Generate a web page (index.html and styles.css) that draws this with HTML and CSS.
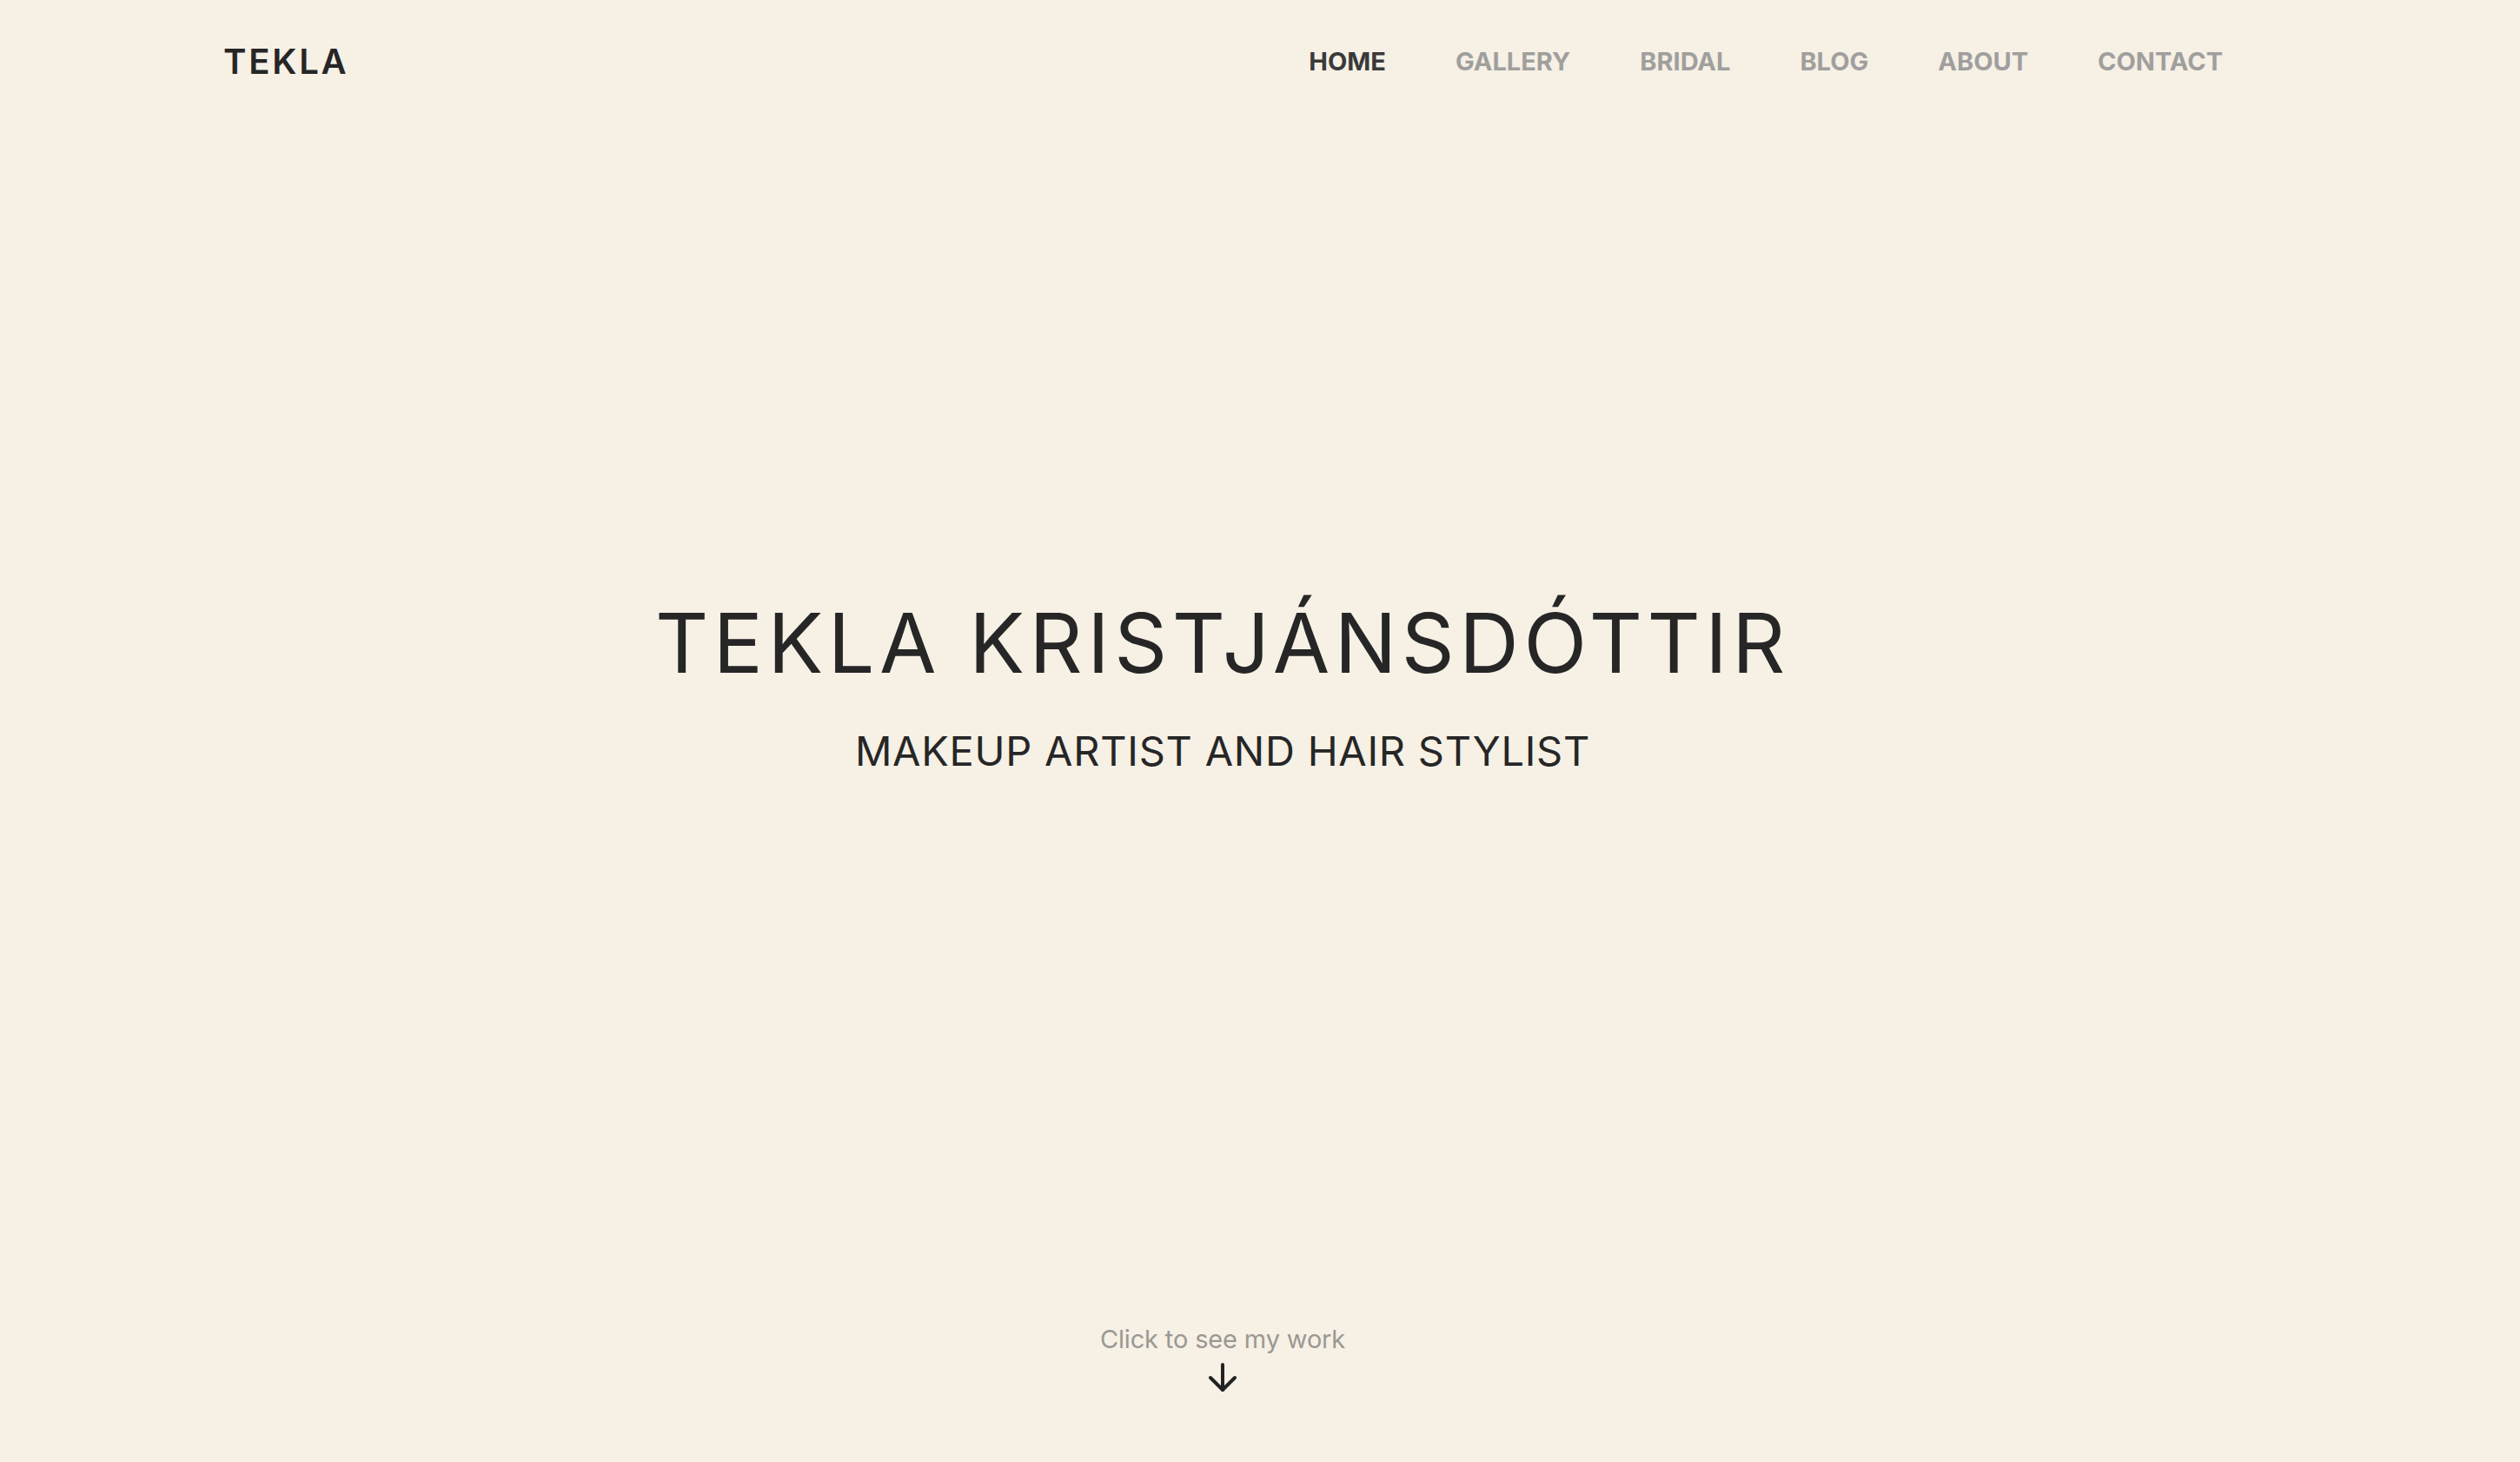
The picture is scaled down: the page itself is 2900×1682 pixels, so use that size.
FILE: index.html
```html
<!DOCTYPE html>
<html lang="en">
<head>
<meta charset="utf-8">
<title>Tekla Kristjánsdóttir</title>
<link rel="stylesheet" href="styles.css">
</head>
<body>
<div class="page">
  <header class="header">
    <a class="logo" href="#">TEKLA</a>
    <nav class="nav">
      <a class="nav-link active" href="#">HOME</a>
      <a class="nav-link" href="#">GALLERY</a>
      <a class="nav-link" href="#">BRIDAL</a>
      <a class="nav-link" href="#">BLOG</a>
      <a class="nav-link" href="#">ABOUT</a>
      <a class="nav-link" href="#">CONTACT</a>
    </nav>
  </header>
  <main class="hero">
    <h1 class="title">TEKLA KRISTJÁNSDÓTTIR</h1>
    <p class="subtitle">MAKEUP ARTIST AND HAIR STYLIST</p>
  </main>
  <a class="more" href="#">
    <span class="more-text">Click to see my work</span>
    <svg class="arrow" width="32" height="34" viewBox="0 0 32 34" fill="none" stroke="#222" stroke-width="4" stroke-linecap="round" stroke-linejoin="round">
      <path d="M16 2 V31"/>
      <path d="M2 17 L16 31 L30 17"/>
    </svg>
  </a>
</div>
</body>
</html>
```

FILE: styles.css
```css
html, body {
  margin: 0;
  padding: 0;
  background: #f6f0e5;
}
body {
  font-family: Inter, "Helvetica Neue", "Liberation Sans", sans-serif;
  color: #262626;
}
a { text-decoration: none; color: inherit; }

.page {
  width: 2814px;
  height: 1682px;
  display: flex;
  flex-direction: column;
  overflow: hidden;
}

.header {
  height: 141px;
  padding: 0 256px 0 257px;
  display: flex;
  align-items: center;
  justify-content: space-between;
}
.logo {
  font-size: 40px;
  font-weight: 600;
  letter-spacing: 2.8px;
  color: #262626;
  line-height: 1;
}
.nav {
  display: flex;
  gap: 80px;
}
.nav-link {
  font-size: 29px;
  font-weight: 700;
  color: #a09f9d;
  line-height: 1;
}
.nav-link.active { color: #3a3a3a; }

.hero {
  padding-top: 551px;
  display: flex;
  flex-direction: column;
  align-items: center;
}
.title {
  margin: 0;
  font-size: 95px;
  font-weight: 400;
  letter-spacing: 5.5px;
  line-height: 1;
  color: #262626;
}
.subtitle {
  margin: 53px 0 0;
  font-size: 47px;
  font-weight: 400;
  letter-spacing: 0.75px;
  line-height: 1;
  color: #262626;
}

.more {
  margin-top: auto;
  margin-bottom: 80px;
  display: flex;
  flex-direction: column;
  align-items: center;
  gap: 13px;
}
.more-text {
  font-size: 29px;
  line-height: 1;
  letter-spacing: -0.15px;
  color: #9b9892;
}
.arrow { display: block; }
```
